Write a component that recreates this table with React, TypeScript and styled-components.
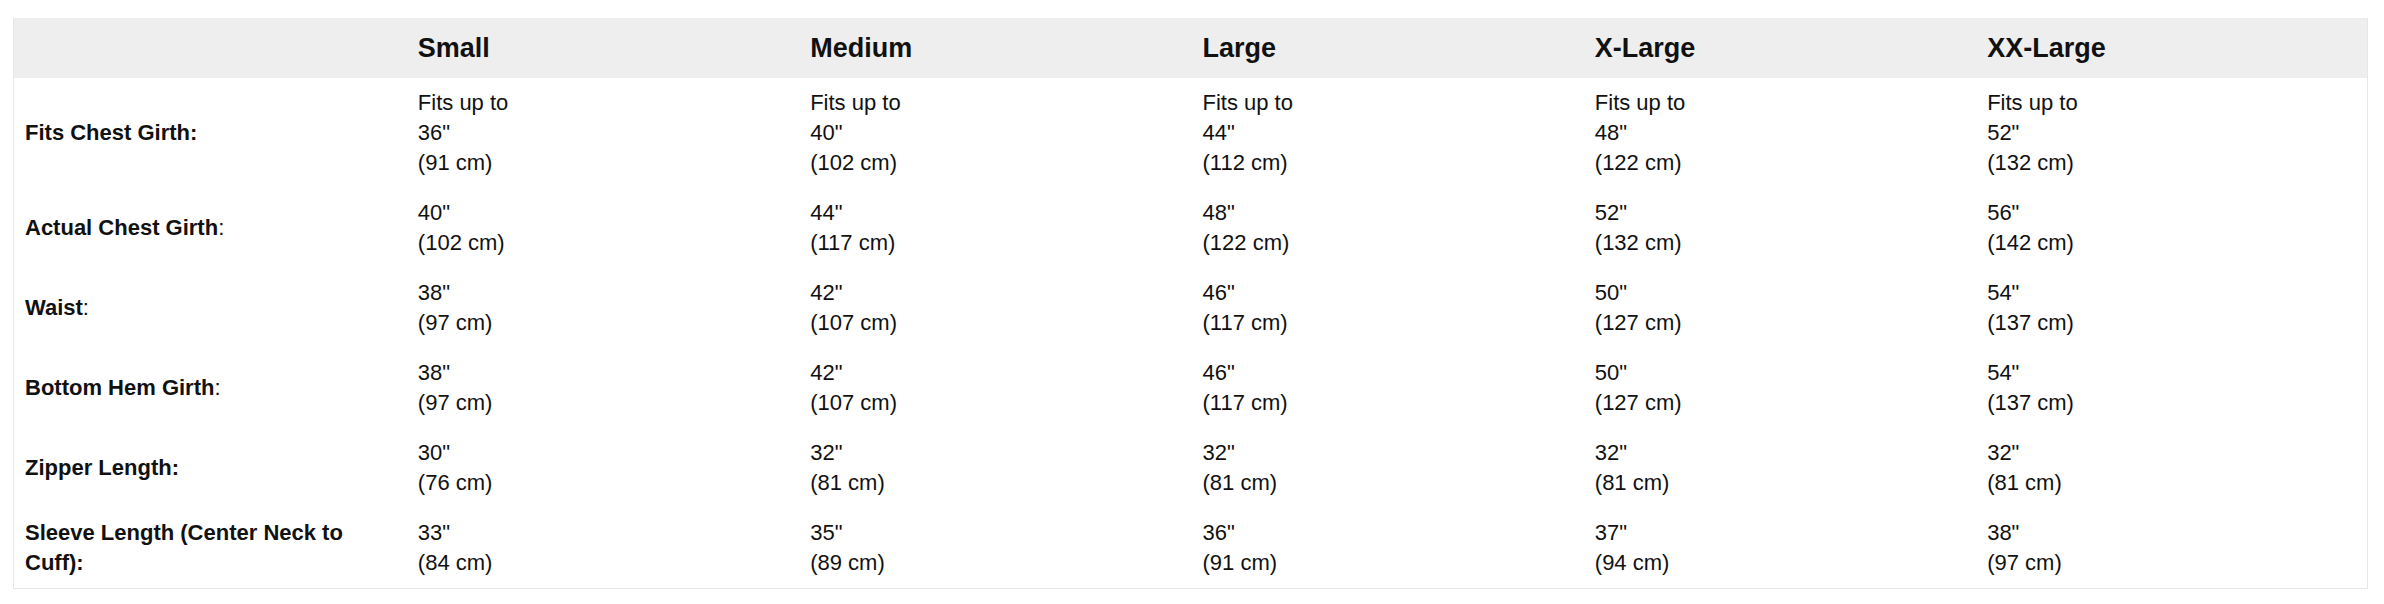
import React from "react";
import styled, { createGlobalStyle } from "styled-components";

const GlobalStyle = createGlobalStyle`
  html, body {
    margin: 0;
    padding: 0;
    background: #ffffff;
  }
  body {
    font-family: "Liberation Sans", Arial, Helvetica, sans-serif;
    color: #111111;
  }
`;

const Page = styled.div`
  padding: 18px 16px 0 13px;
`;

const Table = styled.table`
  width: 100%;
  table-layout: fixed;
  border-collapse: collapse;
  border: 1px solid #e6e6e6;
  border-top: none;
  font-size: 22px;
  line-height: 30px;
`;

const HeadRow = styled.tr`
  background: #eeeeee;
`;

const HeadCell = styled.th`
  text-align: left;
  font-size: 27px;
  font-weight: bold;
  line-height: 30px;
  padding: 15px 12px;
`;

const LabelCell = styled.td`
  vertical-align: middle;
  padding: 10px 12px 10px 11px;
`;

const Label = styled.strong`
  font-weight: bold;
`;

const ValueCell = styled.td`
  vertical-align: middle;
  padding: 10px 12px;
`;

const Line = styled.div`
  white-space: nowrap;
`;

type Row = {
  label: string;
  colonBold: boolean;
  prefix?: string;
  values: [string, string][];
};

const sizes = ["Small", "Medium", "Large", "X-Large", "XX-Large"];

const rows: Row[] = [
  {
    label: "Fits Chest Girth",
    colonBold: true,
    prefix: "Fits up to",
    values: [
      ['36"', "(91 cm)"],
      ['40"', "(102 cm)"],
      ['44"', "(112 cm)"],
      ['48"', "(122 cm)"],
      ['52"', "(132 cm)"],
    ],
  },
  {
    label: "Actual Chest Girth",
    colonBold: false,
    values: [
      ['40"', "(102 cm)"],
      ['44"', "(117 cm)"],
      ['48"', "(122 cm)"],
      ['52"', "(132 cm)"],
      ['56"', "(142 cm)"],
    ],
  },
  {
    label: "Waist",
    colonBold: false,
    values: [
      ['38"', "(97 cm)"],
      ['42"', "(107 cm)"],
      ['46"', "(117 cm)"],
      ['50"', "(127 cm)"],
      ['54"', "(137 cm)"],
    ],
  },
  {
    label: "Bottom Hem Girth",
    colonBold: false,
    values: [
      ['38"', "(97 cm)"],
      ['42"', "(107 cm)"],
      ['46"', "(117 cm)"],
      ['50"', "(127 cm)"],
      ['54"', "(137 cm)"],
    ],
  },
  {
    label: "Zipper Length",
    colonBold: true,
    values: [
      ['30"', "(76 cm)"],
      ['32"', "(81 cm)"],
      ['32"', "(81 cm)"],
      ['32"', "(81 cm)"],
      ['32"', "(81 cm)"],
    ],
  },
  {
    label: "Sleeve Length (Center Neck to Cuff)",
    colonBold: true,
    values: [
      ['33"', "(84 cm)"],
      ['35"', "(89 cm)"],
      ['36"', "(91 cm)"],
      ['37"', "(94 cm)"],
      ['38"', "(97 cm)"],
    ],
  },
];

export default function App() {
  return (
    <>
      <GlobalStyle />
      <Page>
        <Table>
          <thead>
            <HeadRow>
              <HeadCell />
              {sizes.map((s) => (
                <HeadCell key={s}>{s}</HeadCell>
              ))}
            </HeadRow>
          </thead>
          <tbody>
            {rows.map((r) => (
              <tr key={r.label}>
                <LabelCell>
                  {r.colonBold ? (
                    <Label>{r.label}:</Label>
                  ) : (
                    <>
                      <Label>{r.label}</Label>:
                    </>
                  )}
                </LabelCell>
                {r.values.map(([inch, cm], i) => (
                  <ValueCell key={i}>
                    {r.prefix && <Line>{r.prefix}</Line>}
                    <Line>{inch}</Line>
                    <Line>{cm}</Line>
                  </ValueCell>
                ))}
              </tr>
            ))}
          </tbody>
        </Table>
      </Page>
    </>
  );
}
